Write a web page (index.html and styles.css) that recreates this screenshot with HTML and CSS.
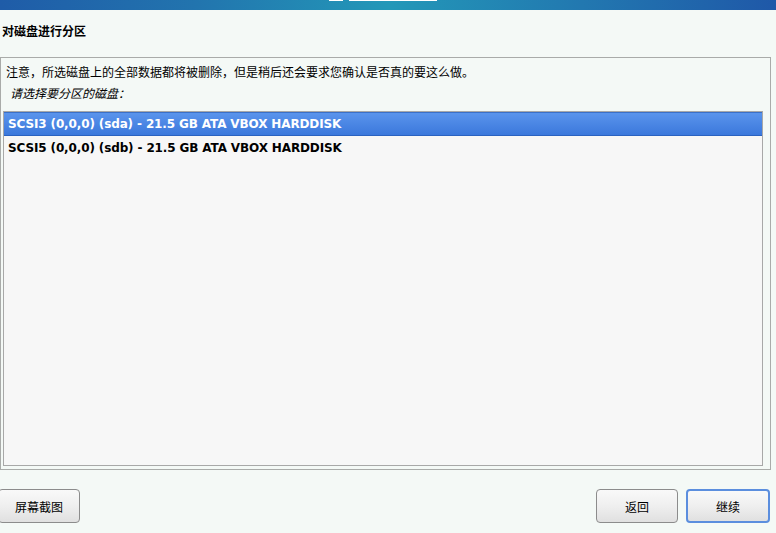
FILE: index.html
```html
<!DOCTYPE html>
<html lang="zh-CN">
<head>
<meta charset="utf-8">
<title>对磁盘进行分区</title>
<link rel="stylesheet" href="styles.css">
</head>
<body>
<div class="banner">
  <span class="tab tab-a"></span>
  <span class="tab tab-b"></span>
</div>
<h1 class="title">对磁盘进行分区</h1>
<div class="frame">
  <p class="notice">注意，所选磁盘上的全部数据都将被删除，但是稍后还会要求您确认是否真的要这么做。</p>
  <p class="prompt">请选择要分区的磁盘：</p>
  <ul class="disks">
    <li class="disk selected">SCSI3 (0,0,0) (sda) - 21.5 GB ATA VBOX HARDDISK</li>
    <li class="disk">SCSI5 (0,0,0) (sdb) - 21.5 GB ATA VBOX HARDDISK</li>
  </ul>
</div>
<div class="actions">
  <button class="btn btn-shot">屏幕截图</button>
  <div class="spacer"></div>
  <button class="btn btn-back">返回</button>
  <button class="btn btn-next">继续</button>
</div>
</body>
</html>
```
FILE: styles.css
```css
html, body {
  margin: 0;
  padding: 0;
}
body {
  width: 776px;
  height: 533px;
  overflow: hidden;
  background: #f4f9f6;
  font-family: "DejaVu Sans", "Noto Sans CJK SC", sans-serif;
  font-size: 12px;
  color: #000;
}
.banner {
  height: 10px;
  display: flex;
  align-items: flex-start;
  background: linear-gradient(90deg, #1f5ca8 0%, #2274ae 25%, #2398b8 50%, #2278b0 75%, #1f58a8 100%);
}
.tab {
  display: block;
  height: 1px;
  background: #ffffff;
}
.tab-a {
  margin-left: 329px;
  width: 14px;
}
.tab-b {
  margin-left: 6px;
  width: 88px;
}
.title {
  margin: 13px 0 0 2px;
  font-size: 12px;
  line-height: 16px;
  font-weight: bold;
  font-family: "Noto Sans CJK SC", "DejaVu Sans", sans-serif;
}
.frame {
  margin-top: 18px;
  width: 769px;
  height: 411px;
  border: 1px solid #a9aba9;
  display: flex;
  flex-direction: column;
}
.notice {
  margin: 6px 0 0 5px;
  line-height: 16px;
  font-family: "Noto Sans CJK SC", "DejaVu Sans", sans-serif;
  font-size: 12px;
}
.prompt {
  margin: 5px 0 0 9px;
  line-height: 16px;
  font-style: italic;
  font-family: "Noto Sans CJK SC", "DejaVu Sans", sans-serif;
  font-size: 12px;
}
.disks {
  list-style: none;
  margin: 10px 7px 3px 2px;
  padding: 0;
  flex: 1;
  border: 1px solid #a8a8a8;
  background: #f7f7f7;
}
.disk {
  height: 24px;
  line-height: 24px;
  padding-left: 4px;
  font-weight: bold;
  font-size: 12px;
  letter-spacing: -0.13px;
}
.selected {
  color: #ffffff;
  background: linear-gradient(#5a94ec, #3b78dc);
  border-top: 1px solid #3a70c8;
  border-bottom: 1px solid #2a62c0;
  height: 22px;
  line-height: 23px;
}
.actions {
  display: flex;
  margin-top: 19px;
  padding-right: 6px;
  gap: 8px;
}
.spacer {
  flex: 1;
}
.btn {
  height: 34px;
  border: 1px solid #8c8c8c;
  border-radius: 4px;
  background: linear-gradient(#f9f9f9 0%, #efefef 50%, #e0e0e0 100%);
  font-family: "Noto Sans CJK SC", "DejaVu Sans", sans-serif;
  font-size: 12px;
  color: #000;
  padding: 0;
}
.btn-shot {
  margin-left: -2px;
  width: 82px;
}
.btn-back {
  width: 82px;
}
.btn-next {
  width: 84px;
  border: 2px solid #5b8ede;
}
```
